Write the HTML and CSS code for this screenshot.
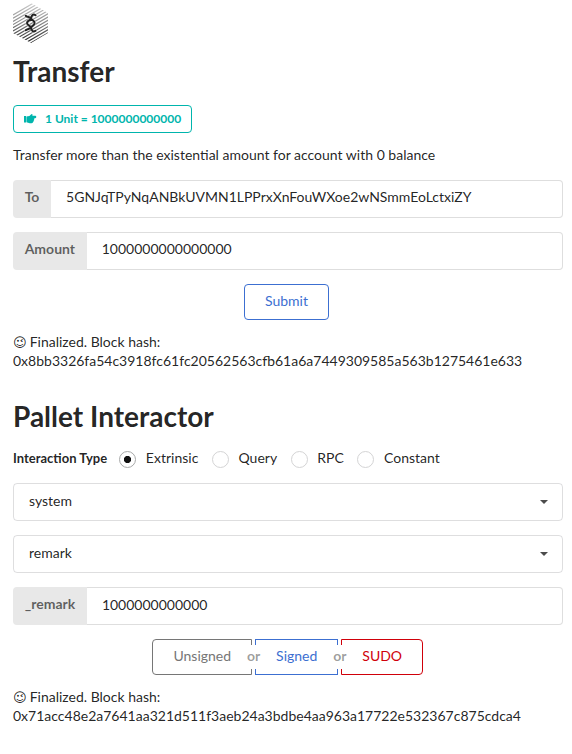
FILE: index.html
```html
<!DOCTYPE html>
<html lang="en">
<head>
<meta charset="utf-8">
<title>Substrate Front End</title>
<link rel="stylesheet" href="styles.css">
</head>
<body>
<main class="page">
  <svg class="logo" viewBox="0 0 36 40" aria-hidden="true">
    <defs>
      <clipPath id="hex"><path d="M18 0 35 10V30L18 40 0 30V10Z"/></clipPath>
      <linearGradient id="shade" x1="0" y1="0" x2="0" y2="40" gradientUnits="userSpaceOnUse"><stop offset="0" stop-color="#ccc"/><stop offset=".5" stop-color="#888"/><stop offset="1" stop-color="#222"/></linearGradient>
      <path id="mark" d="M22.6 12.2C20 10.3 18.6 12.5 18 15.5C17.5 17.5 14 17.6 14 20S17.5 22.5 18 24.5C18.6 27.5 20 29.7 22.6 27.8M12.7 12.7C14.5 14.6 16.8 13.6 18 15.5C19 17.2 21.6 17.6 21.6 20S19 22.8 18 24.5C16.8 26.4 14.5 25.4 12.7 27.3"/>
    </defs>
    <g clip-path="url(#hex)">
      <path d="M0 12 36-9M0 15.2 36-5.8M0 18.4 36-2.6M0 21.6 36 .6M0 24.8 36 3.8M0 28 36 7M0 31.2 36 10.2M0 34.4 36 13.4M0 37.6 36 16.6M0 40.8 36 19.8M0 44 36 23M0 47.2 36 26.2M0 50.4 36 29.4" fill="none" stroke="url(#shade)" stroke-width="1.2"/>
    </g>
    <use href="#mark" class="logo-halo"/>
    <use href="#mark" class="logo-mark"/>
  </svg>
  <section class="panel">
    <h1>Transfer</h1>
    <div class="label">
      <svg class="hand" viewBox="0 0 14 12" aria-hidden="true"><path d="M0 3H2V9.5H0ZM2.4 3.4 5.4 2.9 7 1.4Q8.2 .6 8.5 1.6L8.4 2.8H11.2Q12.3 2.9 12.3 4T11.2 5.2H10.2Q10.6 5.8 10.1 6.4 10.4 7.3 9.6 7.8 9.8 8.8 9 9.2 8.7 10.3 7.4 10.3H5.8L2.4 9.2Z"/></svg>
      <span>1 Unit = 1000000000000</span>
    </div>
    <p class="hint">Transfer more than the existential amount for account with 0 balance</p>
    <div class="field"><span class="field-label">To</span><span class="field-value">5GNJqTPyNqANBkUVMN1LPPrxXnFouWXoe2wNSmmEoLctxiZY</span></div>
    <div class="field"><span class="field-label">Amount</span><span class="field-value">1000000000000000</span></div>
    <div class="actions"><button class="button blue">Submit</button></div>
    <div class="status"><span class="emoji">😉</span> Finalized. Block hash:<br>0x8bb3326fa54c3918fc61fc20562563cfb61a6a7449309585a563b1275461e633</div>
  </section>
  <section class="panel interactor">
    <h1>Pallet Interactor</h1>
    <div class="types">
      <strong>Interaction Type</strong>
      <span class="radio checked">Extrinsic</span>
      <span class="radio">Query</span>
      <span class="radio">RPC</span>
      <span class="radio">Constant</span>
    </div>
    <div class="select"><span>system</span><i class="caret"></i></div>
    <div class="select"><span>remark</span><i class="caret"></i></div>
    <div class="field param"><span class="field-label">_remark</span><span class="field-value">1000000000000</span></div>
    <div class="actions group">
      <button class="button grey">Unsigned</button><span class="or"><b>or</b></span><button class="button blue">Signed</button><span class="or"><b>or</b></span><button class="button red">SUDO</button>
    </div>
    <div class="status"><span class="emoji">😉</span> Finalized. Block hash:<br>0x71acc48e2a7641aa321d511f3aeb24a3bdbe4aa963a17722e532367c875cdca4</div>
  </section>
</main>
</body>
</html>
```

FILE: styles.css
```css
* { box-sizing: border-box; }
body { margin: 0; background: #fff; color: rgba(0,0,0,.87); font: 14px/18px Lato, "Liberation Sans", sans-serif; }
.page { padding: 3px 9px 0 13px; }
.logo { display: block; width: 36px; height: 40px; }
.logo-halo, .logo-mark { fill: none; stroke-linecap: round; }
.logo-halo { stroke: #fff; stroke-width: 3; stroke-opacity: .6; }
.logo-mark { stroke: #222; stroke-width: 2; }
h1 { margin: 0; font-size: 28px; line-height: 36px; font-weight: 700; }
.panel { padding-top: 10px; }
.interactor { padding-top: 28px; }
.label { display: flex; align-items: center; width: 179px; height: 28px; margin-top: 16px; padding-left: 10px; border: 1px solid #00b5ad; border-radius: 4px; color: #00b5ad; font-size: 12px; line-height: 12px; font-weight: 700; }
.hand { width: 14px; height: 12px; margin-right: 7px; fill: currentColor; }
.hint { margin: 12px 0 16px; line-height: 19px; }
.field { display: flex; height: 38px; margin-bottom: 14px; }
.field-label { padding: 8px 11.67px; background: #e8e8e8; border-radius: 4px 0 0 4px; color: rgba(0,0,0,.6); font-weight: 700; }
.field-value { flex: 1; padding: 7px 15px; border: 1px solid rgba(34,36,38,.15); border-left: 0; border-radius: 0 4px 4px 0; }
.param .field-value { padding-top: 8px; }
.actions { display: flex; justify-content: center; height: 36px; padding-right: 3px; }
.button { height: 36px; padding: 0 20px 2px; border: 1px solid currentColor; border-radius: 4px; background: #fff; font: inherit; }
.blue { color: #3c6fd1; }
.grey { color: #767676; }
.red { color: #d0000a; }
.status { margin-top: 12px; line-height: 19px; }
.emoji { font-family: "DejaVu Sans", sans-serif; font-size: 13px; letter-spacing: -.5px; line-height: 1; }
.types { display: flex; height: 18px; margin: 15px 0 16px; }
.types strong { font-size: 13px; margin-right: 12px; }
.radio { position: relative; padding-left: 26.7px; margin-right: 13.5px; }
.radio::before { content: ""; position: absolute; left: 0; top: 2px; width: 15px; height: 15px; border: 1px solid #d4d4d5; border-radius: 50%; }
.checked::before { border-color: #a8a9a9; background: radial-gradient(circle, #111 0 3.3px, transparent 3.9px); }
.select { display: flex; align-items: center; justify-content: space-between; height: 38px; margin-bottom: 14px; padding: 0 14px 2px 15px; border: 1px solid rgba(34,36,38,.15); border-radius: 4px; }
.caret { border: 4px solid transparent; border-top-color: #4c4c4c; border-bottom: 0; margin-top: 2px; }
.group { padding-right: 1px; }
.group .button { border-radius: 0; }
.group .grey { padding-left: 20.5px; border-radius: 4px 0 0 4px; }
.group .red { border-radius: 0 4px 4px 0; }
.or { position: relative; z-index: 1; width: 3px; display: flex; justify-content: center; align-items: center; }
.or b { flex: none; width: 18px; height: 24px; padding-bottom: 2px; background: #fff; color: rgba(0,0,0,.4); line-height: 22px; text-align: center; }
```
